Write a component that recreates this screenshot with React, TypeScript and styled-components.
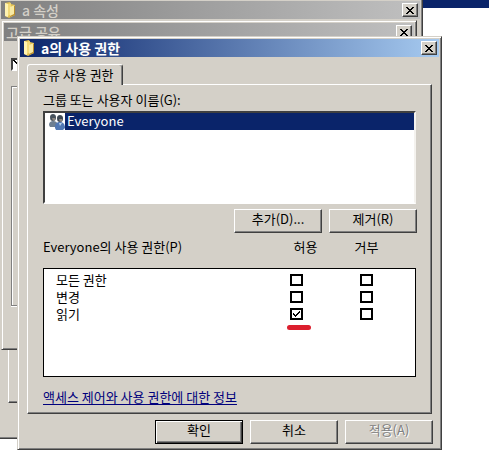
import React, { ReactNode, useState } from "react";
import styled, { createGlobalStyle, css } from "styled-components";

const face = "#d4d0c8";
const shade = "#808080";
const dark = "#404040";
const navy = "#0a246a";

const GlobalStyle = createGlobalStyle`
  * { box-sizing: border-box; }
  body {
    margin: 0;
    background: #fff;
    color: #000;
    font-family: "Noto Sans CJK KR", "Noto Sans", sans-serif;
    font-size: 13px;
    line-height: 16px;
  }
`;

const Desktop = styled.main`
  position: relative;
  min-height: 100vh;
  overflow: hidden;
`;

const BackgroundStrip = styled.div`
  height: 8px;
  margin-right: 11px;
  background: ${navy};
`;

const raised = css`
  border: 1px solid;
  border-color: #fff ${dark} ${dark} #fff;
  box-shadow: inset -1px -1px 0 ${shade};
`;

const WindowFrame = styled.section<{ $left: number; $top: number; $right: number }>`
  position: absolute;
  left: ${(p) => p.$left}px;
  top: ${(p) => p.$top}px;
  right: ${(p) => p.$right}px;
  padding: 2px;
  background: ${face};
  border: 1px solid;
  border-color: ${face} ${dark} ${dark} ${face};
  box-shadow: inset 1px 1px 0 #fff, inset -1px -1px 0 ${shade};
`;

const TitleBar = styled.header<{ $active?: boolean }>`
  display: flex;
  align-items: center;
  gap: 5px;
  height: 18px;
  padding: 0 2px;
  color: ${(p) => (p.$active ? "#fff" : face)};
  background: ${(p) =>
    p.$active
      ? `linear-gradient(90deg, ${navy}, #a6caf0)`
      : "linear-gradient(90deg, #808080, #c0c0c0)"};
`;

const Title = styled.h1<{ $strong?: boolean }>`
  flex: 1;
  margin: 0;
  font-size: 14px;
  font-weight: ${(p) => (p.$strong ? 700 : 500)};
  line-height: 18px;
`;

const CloseButton = styled.button`
  ${raised}
  display: grid;
  place-items: center;
  width: 16px;
  height: 14px;
  padding: 0;
  background: ${face};
`;

const BackBody = styled.div<{ $height: number; $top: number; $side: number }>`
  height: ${(p) => p.$height}px;
  padding: ${(p) => p.$top}px ${(p) => p.$side}px 0;
`;

const ShareOption = styled.label`
  display: flex;
`;

const SunkenCheck = styled.input`
  appearance: none;
  width: 13px;
  height: 13px;
  margin: 0;
  background: linear-gradient(45deg, #fff 45%, #000 45% 60%, #fff 60%);
  border: 2px solid ${dark};
  border-color: ${dark} #fff #fff ${dark};
`;

const GroupOutline = styled.div`
  height: 220px;
  margin-top: 15px;
  border: 1px solid ${shade};
  box-shadow: inset 1px 1px 0 #fff, 0 1px 0 #fff;
`;

const BackPanel = styled.div`
  ${raised}
  height: 84px;
`;

const DialogBody = styled.div`
  padding: 7px 7px 3px;
`;

const Tab = styled.button`
  position: relative;
  display: block;
  height: 21px;
  margin-bottom: -1px;
  padding: 0 8px 1px;
  font: inherit;
  line-height: 18px;
  background: ${face};
  border: 1px solid;
  border-color: #fff ${dark} ${face} #fff;
  border-bottom: 0;
  border-radius: 3px 3px 0 0;
  box-shadow: inset -1px 0 0 ${shade};
`;

const TabPage = styled.div`
  ${raised}
  padding: 6px 15px 7px;
`;

const FieldLabel = styled.div`
  line-height: 18px;
`;

const UserList = styled.ul`
  height: 93px;
  margin: 2px 0 0;
  padding: 0;
  list-style: none;
  background: #fff;
  border: 2px solid;
  border-color: ${dark} #f4f2ee #fff ${dark};
`;

const UserRow = styled.li`
  display: flex;
  padding-left: 4px;
`;

const UserName = styled.span`
  flex: 1;
  height: 17px;
  padding-left: 2px;
  line-height: 16px;
  color: #fff;
  background: ${navy};
`;

const ButtonRow = styled.div<{ $top: number }>`
  display: flex;
  justify-content: flex-end;
  gap: 7px;
  margin: ${(p) => p.$top}px -1px 0 0;
`;

const PushButton = styled.button<{ $primary?: boolean }>`
  ${raised}
  width: 88px;
  height: 24px;
  padding: 0 0 4px;
  font: inherit;
  line-height: 18px;
  color: #000;
  background: ${face};
  ${(p) =>
    p.$primary &&
    css`
      border-color: #000;
      box-shadow: inset 1px 1px 0 #fff, inset -1px -1px 0 ${dark}, inset -2px -2px 0 ${shade};
    `}
  &:disabled {
    color: ${shade};
    text-shadow: 1px 1px 0 #fff;
  }
`;

const PermissionHeader = styled.div`
  display: grid;
  grid-template-columns: 1fr 61px 61px;
  margin-top: 5px;
  padding-right: 19px;
  line-height: 18px;
`;

const HeaderCell = styled.span`
  text-align: center;
`;

const PermissionBox = styled.div`
  height: 109px;
  margin-top: 12px;
  padding: 2px 14px 0 12px;
  background: #fff;
  border: 1px solid #000;
`;

const PermissionTable = styled.table`
  width: 100%;
  table-layout: fixed;
  border-collapse: collapse;
`;

const NameCell = styled.th`
  height: 17px;
  padding: 0;
  font-weight: 400;
  line-height: 17px;
  text-align: left;
`;

const CheckCell = styled.td`
  width: 70px;
  height: 17px;
  padding: 0;
`;

const CheckWrap = styled.label`
  position: relative;
  display: grid;
  width: 13px;
  margin: 0 auto;
  > * {
    grid-area: 1 / 1;
  }
  > svg {
    margin: 3px;
    pointer-events: none;
  }
`;

const CheckInput = styled.input`
  appearance: none;
  width: 13px;
  height: 12px;
  margin: 0;
  background: #fff;
  border: 2px solid #000;
`;

const RedMark = styled.span`
  position: absolute;
  top: 17px;
  left: -3px;
  width: 24px;
  height: 5px;
  background: #dc1f2e;
  border-radius: 3px;
`;

const HelpLink = styled.a`
  display: block;
  width: fit-content;
  margin-top: 11px;
  line-height: 18px;
  color: #00007c;
  text-decoration: underline;
  text-underline-offset: 2px;
`;

function FolderIcon() {
  return (
    <svg width="14" height="16" viewBox="0 0 14 16" aria-hidden="true">
      <path d="M2 1l5-1 1 2 4 1v10l-6 3-4-2z" fill="#e3c253" />
      <path d="M2 1l3 1v13l-3-1z" fill="#fff3b1" />
      <path d="M5 2l3-1v11l-3 2z" fill="#f3da78" />
      <path d="M7 5l5-2v9l-5 3z" fill="#f8eaa4" />
      <path d="M11 4l1-1v10l-5 2v-1l4-2z" fill="#b98d2c" />
    </svg>
  );
}

function UsersIcon() {
  return (
    <svg width="16" height="17" viewBox="0 0 16 17" aria-hidden="true">
      <path d="M0 12c0-3 2-4 4-4s5 1 5 5l-2 1H1z" fill="#6d7f92" />
      <path d="M1 4c0-4 6-4 6 0 0 3-1 4-3 4S1 7 1 4" fill="#46515c" />
      <path d="M3 5h3v2l-2 1z" fill="#8b8580" />
      <path d="M6 15c0-4 1-6 5-6 3 0 5 2 5 6l-2 2H7z" fill="#5078b4" />
      <path d="M8 5c0-4 6-4 6 0 0 3-1 4-3 4S8 8 8 5" fill="#3c4651" />
      <path d="M10 6h3v2l-2 1z" fill="#8c8681" />
      <path d="M10 10l1 3 2-3z" fill="#b8d0e8" />
    </svg>
  );
}

function CloseIcon() {
  return (
    <svg width="8" height="7" viewBox="0 0 8 7" shapeRendering="crispEdges" aria-hidden="true">
      <path d="M0 0h2v1h1v1h2v-1h1v-1h2v1h-1v1h-1v1h-1v1h1v1h1v1h1v1h-2v-1h-1v-1h-2v1h-1v1h-2v-1h1v-1h1v-1h1v-1h-1v-1h-1v-1h-1z" />
    </svg>
  );
}

function CheckIcon() {
  return (
    <svg width="7" height="6" viewBox="0 0 7 6" shapeRendering="crispEdges" aria-hidden="true">
      <path d="M0 2h1v1h1v1h1v-1h1v-1h1v-1h1v-1h1v2h-1v1h-1v1h-1v1h-1v1h-1v-1h-1v-1h-1z" />
    </svg>
  );
}

type BarProps = { title: string; active?: boolean; icon?: ReactNode };

function WindowTitle({ title, active, icon }: BarProps) {
  return (
    <TitleBar $active={active}>
      {icon}
      <Title $strong={active}>{title}</Title>
      <CloseButton type="button" aria-label="닫기">
        <CloseIcon />
      </CloseButton>
    </TitleBar>
  );
}

type CheckProps = { label: string; initial?: boolean; marked?: boolean };

function PermissionCheck({ label, initial = false, marked }: CheckProps) {
  const [checked, setChecked] = useState(initial);
  return (
    <CheckWrap>
      <CheckInput
        type="checkbox"
        aria-label={label}
        checked={checked}
        onChange={(e) => setChecked(e.target.checked)}
      />
      {checked && <CheckIcon />}
      {marked && <RedMark />}
    </CheckWrap>
  );
}

const permissions = [
  { name: "모든 권한", allow: false },
  { name: "변경", allow: false },
  { name: "읽기", allow: true },
];

export default function App() {
  return (
    <>
      <GlobalStyle />
      <Desktop>
        <BackgroundStrip />
        <WindowFrame $left={-2} $top={-2} $right={77}>
          <WindowTitle title="a 속성" icon={<FolderIcon />} />
          <BackBody $height={417} $top={300} $side={7}>
            <BackPanel />
          </BackBody>
        </WindowFrame>
        <WindowFrame $left={1} $top={20} $right={83}>
          <WindowTitle title="고급 공유" />
          <BackBody $height={306} $top={17} $side={7}>
            <ShareOption>
              <SunkenCheck type="checkbox" defaultChecked aria-label="공유" />
            </ShareOption>
            <GroupOutline />
          </BackBody>
        </WindowFrame>
        <WindowFrame $left={17} $top={36} $right={58}>
          <WindowTitle title="a의 사용 권한" active icon={<FolderIcon />} />
          <DialogBody>
            <Tab type="button" role="tab" aria-selected="true">
              공유 사용 권한
            </Tab>
            <TabPage role="tabpanel">
              <FieldLabel id="users">그룹 또는 사용자 이름(G):</FieldLabel>
              <UserList aria-labelledby="users">
                <UserRow>
                  <UsersIcon />
                  <UserName>Everyone</UserName>
                </UserRow>
              </UserList>
              <ButtonRow $top={5}>
                <PushButton type="button">추가(D)...</PushButton>
                <PushButton type="button">제거(R)</PushButton>
              </ButtonRow>
              <PermissionHeader>
                <span id="permissions">Everyone의 사용 권한(P)</span>
                <HeaderCell>허용</HeaderCell>
                <HeaderCell>거부</HeaderCell>
              </PermissionHeader>
              <PermissionBox>
                <PermissionTable aria-labelledby="permissions">
                  <tbody>
                    {permissions.map((p) => (
                      <tr key={p.name}>
                        <NameCell scope="row">{p.name}</NameCell>
                        <CheckCell>
                          <PermissionCheck label={`${p.name} 허용`} initial={p.allow} marked={p.allow} />
                        </CheckCell>
                        <CheckCell>
                          <PermissionCheck label={`${p.name} 거부`} />
                        </CheckCell>
                      </tr>
                    ))}
                  </tbody>
                </PermissionTable>
              </PermissionBox>
              <HelpLink href="#help">액세스 제어와 사용 권한에 대한 정보</HelpLink>
            </TabPage>
            <ButtonRow $top={6}>
              <PushButton type="button" $primary>
                확인
              </PushButton>
              <PushButton type="button">취소</PushButton>
              <PushButton type="button" disabled>
                적용(A)
              </PushButton>
            </ButtonRow>
          </DialogBody>
        </WindowFrame>
      </Desktop>
    </>
  );
}
